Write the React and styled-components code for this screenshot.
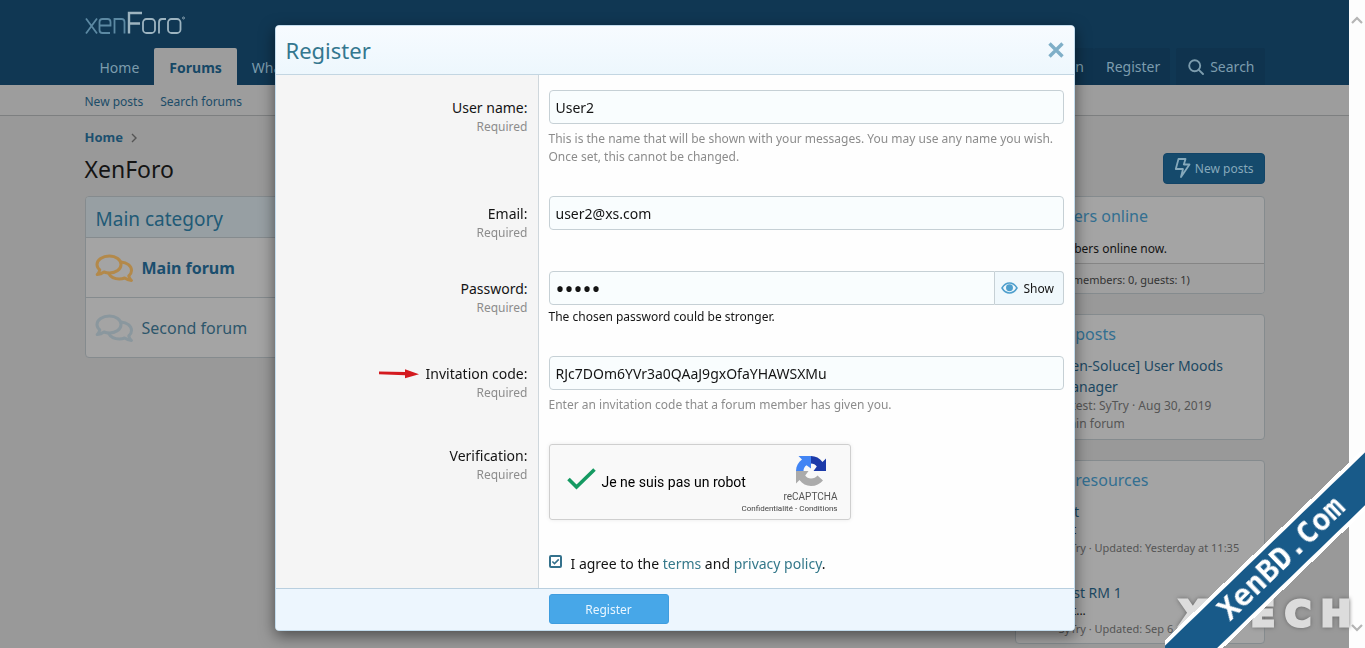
import React from 'react';
import styled, { createGlobalStyle } from 'styled-components';

const Global = createGlobalStyle`
  * { box-sizing: border-box; }
  html, body { margin: 0; height: 100%; overflow: hidden; }
  body { background: #999; font-family: "Noto Sans", "Open Sans", sans-serif; font-size: 14px; line-height: 21px; color: #141414; }
  a { text-decoration: none; }
  h1, h2, h3, p { margin: 0; font-weight: 400; }
  button, input { font-family: inherit; }
`;

const Screen = styled.div`
  display: grid;
  grid-template-columns: minmax(0, 1fr) 16px;
  height: 100vh;
  overflow: hidden;
`;
const Page = styled.div`min-width: 0; position: relative; overflow: hidden;`;
const Scrollbar = styled.div`
  background: #fdfdfd;
  display: flex;
  flex-direction: column;
  justify-content: space-between;
  align-items: center;
  padding: 15px 0;
`;
const Inner = styled.div`
  max-width: 1200px;
  margin: 0 auto;
  padding: 0 10px;
`;

const Header = styled.header`background: #103753; height: 85px;`;
const LogoRow = styled.div`height: 48px; padding-top: 11px;`;
const Nav = styled.nav`display: flex; justify-content: space-between; height: 37px;`;
const NavGroup = styled.div`display: flex; gap: ${p => p.$gap || 0}px;`;
const NavLink = styled.a`
  display: flex;
  align-items: center;
  gap: 6px;
  height: 37px;
  padding: 2px 15px 0;
  color: ${p => (p.$active ? '#164866' : '#7c9cad')};
  font-weight: ${p => (p.$active ? 700 : 400)};
  background: ${p => (p.$active ? '#9d9d9d' : 'transparent')};
  border-radius: 2px 2px 0 0;
`;
const UserLink = styled(NavLink)`padding: 0 10px 0 12px; background: #0f334e;`;
const SubNav = styled.div`background: #9d9d9d; border-bottom: 1px solid #7d7f80; height: 31px;`;
const SubLinks = styled.div`display: flex; gap: 17px; padding-top: 6px; font-size: 12px; a { color: #1c4c68; }`;

const Crumb = styled.nav`
  display: flex;
  align-items: center;
  gap: 8px;
  padding-top: 11px;
  font-size: 13px;
  font-weight: 700;
  a { color: #1c506f; }
`;
const TitleRow = styled.div`
  display: flex;
  justify-content: space-between;
  align-items: center;
  height: 34px;
  margin-top: 3px;
`;
const PageTitle = styled.h1`font-size: 23px; line-height: 34px; padding-top: 1px;`;
const NewPosts = styled.button`
  display: flex;
  align-items: center;
  gap: 4px;
  height: 31px;
  padding: 0 10px;
  border: 1px solid #124467;
  border-radius: 4px;
  background: #154a6c;
  color: #86a9bb;
  font-size: 12px;
`;
const Columns = styled.div`
  display: grid;
  grid-template-columns: minmax(0, 1fr) 250px;
  gap: 20px;
  align-items: start;
  margin-top: 11px;
`;
const Block = styled.section`
  border: 1px solid #858b8e;
  border-radius: 4px;
  background: #a4a4a4;
  overflow: hidden;
`;
const CategoryTitle = styled.h2`
  padding: 7px 10px 3px;
  font-size: 19px;
  line-height: 30px;
  color: #215a76;
  background: #979fa3;
`;
const ForumRow = styled.div`
  display: flex;
  align-items: center;
  gap: 9px;
  height: 60px;
  padding: 2px 9px 0;
  border-top: 1px solid #858b8e;
  a { font-size: 16px; color: ${p => (p.$unread ? '#1a4e6e' : '#2d566b')}; font-weight: ${p => (p.$unread ? 700 : 400)}; }
`;
const Side = styled.aside`display: flex; flex-direction: column; gap: 20px;`;
const SideTitle = styled.h3`padding: 8px 10px 7px; font-size: 16px; line-height: 22px; color: #336f91;`;
const SideText = styled.p`padding: 4px 10px; font-size: 12px;`;
const SideFoot = styled.div`border-top: 1px solid #858585; padding: 5px 10px 3px 14px; font-size: 11px; color: #333; background: #a0a0a0;`;
const SideItem = styled.article`
  padding: 3px 10px 6px 43px;
  a { color: #1c4862; display: block; }
`;
const Meta = styled.div`font-size: 12px; line-height: 18px; color: #555;`;
const Resource = styled.article`
  padding: 5px 10px 5px 43px;
  line-height: 18px;
  white-space: nowrap;
  & + & { padding-top: 22px; }
  a { color: #1c4862; display: block; }
  p { font-size: 12px; }
  ${Meta} { font-size: 11px; }
`;

const Overlay = styled.div`
  position: fixed;
  inset: 0 16px 0 0;
  display: flex;
  justify-content: center;
  align-items: flex-start;
  padding-top: 25px;
`;
const Dialog = styled.form`
  width: 800px;
  max-width: 100%;
  border: 1px solid #c3dced;
  border-radius: 4px;
  background: #fefefe;
  box-shadow: 0 5px 15px rgba(0, 0, 0, 0.5);
  overflow: hidden;
`;
const DialogHead = styled.div`
  display: flex;
  justify-content: space-between;
  align-items: center;
  height: 49px;
  padding: 0 9px 0 10px;
  background: linear-gradient(#f7fbff, #edf7fd);
  border-bottom: 1px solid #c3d6e2;
  h2 { font-size: 22px; line-height: 30px; color: #34778f; }
`;
const Close = styled.button`border: 0; padding: 0; background: none; height: 18px; line-height: 0;`;
const Row = styled.div`display: grid; grid-template-columns: 263px minmax(0, 1fr);`;
const LabelCell = styled.div`
  padding: ${p => p.$top || 22}px 10px 14px;
  background: #f5f5f5;
  border-right: 1px solid #cfd7dc;
  text-align: right;
  label { display: block; }
`;
const LabelLine = styled.div`display: flex; justify-content: flex-end; align-items: center; gap: 6px;`;
const Required = styled.div`font-size: 12px; line-height: 18px; color: #8c8c8c;`;
const Field = styled.div`padding: 15px 10px;`;
const Input = styled.input`
  display: block;
  width: 100%;
  height: 34px;
  padding: 0 6px;
  border: 1px solid #c6d0d5;
  border-radius: 4px;
  background: #f9fdfe;
  color: #141414;
  font-size: 14px;
  outline: 0;
  &[type='password'] { font-size: 24px; }
`;
const Joined = styled.div`
  display: flex;
  input { flex: 1; min-width: 0; border-radius: 4px 0 0 4px; }
`;
const Show = styled.button`
  display: flex;
  align-items: center;
  gap: 6px;
  width: 69px;
  padding: 0 6px;
  border: 1px solid #c6d0d5;
  border-left: 0;
  border-radius: 0 4px 4px 0;
  background: #f0f8fc;
  color: #141414;
  font-size: 12px;
`;
const Hint = styled.p`
  margin-top: ${p => (p.$strong ? 3 : 6)}px;
  font-size: 12px;
  line-height: 18px;
  color: ${p => (p.$strong ? '#141414' : '#8c8c8c')};
`;
const Captcha = styled.div`
  display: flex;
  width: 302px;
  height: 76px;
  padding: 10px 12px 0 17px;
  border: 1px solid #cfcfcf;
  border-radius: 3px;
  background: #f9f9f9;
  box-shadow: 0 0 4px rgba(0, 0, 0, 0.08);
  font-family: Roboto, sans-serif;
`;
const Robot = styled.div`
  flex: 1;
  min-width: 0;
  display: flex;
  align-items: center;
  gap: 6px;
  height: 54px;
  color: #000;
  white-space: nowrap;
  svg { flex: none; margin-bottom: 6px; }
`;
const Brand = styled.div`
  display: flex;
  flex-direction: column;
  align-items: flex-end;
  font-size: 10px;
  line-height: 14px;
  color: #555;
  svg { margin: 0 11px 3px 0; }
`;
const Legal = styled.div`font-size: 8px; line-height: 10px; color: #444; white-space: nowrap; a { color: inherit; }`;
const Agree = styled.label`
  display: flex;
  align-items: center;
  gap: 9px;
  a { color: #34788a; }
`;
const Tick = styled.input`
  appearance: none;
  width: 13px;
  height: 13px;
  margin: 0 0 4px;
  border: 2px solid #34718c;
  border-radius: 2px;
  background: #fff url("data:image/svg+xml,%3Csvg xmlns='http://www.w3.org/2000/svg' viewBox='0 0 10 10'%3E%3Cpath d='M1.5 5l2.4 2.4L8.6 2.6' fill='none' stroke='%2334718c' stroke-width='1.7'/%3E%3C/svg%3E") center / 9px 9px;
`;
const AgreeField = styled(Field)`padding: 18px 10px 14px;`;
const DialogFoot = styled.div`
  display: flex;
  padding: 5px 10px 6px 273px;
  border-top: 1px solid #b9cfdf;
  background: #edf6fe;
`;
const Submit = styled.button`
  width: 120px;
  height: 30px;
  border: 1px solid #3f9ddf;
  border-radius: 3px;
  background: #47a7e8;
  color: #e9f6ff;
  font-size: 12px;
`;

const Corner = styled.div`
  position: fixed;
  right: 0;
  bottom: 0;
  width: 200px;
  height: 196px;
  overflow: hidden;
  pointer-events: none;
`;
const Ribbon = styled.div`
  position: absolute;
  left: -43px;
  top: 84px;
  width: 320px;
  height: 46px;
  border: solid #fff;
  border-width: 4px 0;
  background: #185a89;
  color: #fff;
  font: 700 30px/36px "DejaVu Sans Mono", monospace;
  text-align: center;
  transform: rotate(-44deg);
`;
const Mark = styled.div`
  position: absolute;
  right: 14px;
  bottom: 14px;
  width: 172px;
  display: flex;
  justify-content: space-between;
  color: #dcdcdc;
  font: 700 36px/40px "DejaVu Sans", sans-serif;
  -webkit-text-stroke: 3px #dcdcdc;
  filter: drop-shadow(0 0 2px #666);
`;

const Logo = () => (
  <svg width="101" height="26" viewBox="0 0 101 26" fill="none" strokeWidth="1.8" role="img" aria-label="xenForo">
    <g stroke="#5c89a3">
      <path d="M1 7.500L12 22.500M12 7.500L1 22.500" />
      <path d="M14.500 14.500H25.500V11Q25.500 8 22.500 8H17.500Q14.500 8 14.500 11V19Q14.500 22 17.500 22H25" />
      <path d="M29.500 22.500V8H36.500Q39.500 8 39.500 11V22.500" />
    </g>
    <g stroke="#9db4c0">
      <path d="M44 22.500V2H57M44 12.500H55" strokeWidth="2.400" />
      <rect x="58" y="8" width="12" height="14" rx="3.500" />
      <path d="M74 22.500V11.500Q74 8 77 8H81" />
      <rect x="83" y="8" width="12.500" height="14" rx="3.500" />
      <circle cx="98.500" cy="7" r="1" strokeWidth="0.800" />
    </g>
  </svg>
);
const Comments = ({ color }) => (
  <svg width="38" height="32" viewBox="0 0 38 32" fill="none" stroke={color} strokeWidth="3" strokeLinejoin="round">
    <path d="M14.500 3C21 3 26 6.700 26 11.500S21 20 14.500 20C12.500 20 10.700 19.700 9 19C7.200 20.300 5 21.300 2.200 21.600C3.600 20.200 4.500 18.500 4.800 16.800C3 15.300 2 13.500 2 11.500C2 6.700 7.500 3 14.500 3Z" />
    <path d="M26 9C32 9.300 36.500 13 36.500 17.500C36.500 19.600 35.500 21.400 33.800 22.900C34.100 24.600 35 26.100 36.400 27.500C33.700 27.200 31.500 26.300 29.700 25C28 25.700 26.200 26 24.200 26C19.600 26 15.700 24 13.700 20.500" />
  </svg>
);
const Bolt = () => (
  <svg width="17" height="20" viewBox="0 0 17 20" fill="none" stroke="#86a9bb" strokeWidth="1.800" strokeLinejoin="round">
    <path d="M4.500 1H11.500L9.800 6.500H15.500L7 19L9 11H1.800Z" />
  </svg>
);
const Search = () => (
  <svg width="16" height="16" viewBox="0 0 16 16" fill="none" stroke="#7c9cad" strokeWidth="1.900" strokeLinecap="round">
    <circle cx="6.700" cy="6.700" r="5.500" /><path d="M10.800 10.800L15 15" />
  </svg>
);
const Eye = () => (
  <svg width="17" height="12" viewBox="0 0 17 12" fill="none" stroke="#4f9fcd" strokeWidth="1.500">
    <path d="M1 6C3 2.600 5.500 1 8.500 1S14 2.600 16 6C14 9.400 11.500 11 8.500 11S3 9.400 1 6Z" />
    <circle cx="8.500" cy="5.800" r="2.700" fill="#4f9fcd" />
  </svg>
);
const Chevron = ({ d }) => (
  <svg width="12" height="10" viewBox="0 0 12 10" fill="none" stroke="#b5b5b5" strokeWidth="2.200"><path d={d} /></svg>
);
const Arrow = () => (
  <svg width="42" height="10" viewBox="0 0 42 10" fill="#d41a1f"><path d="M1 2.500L27 3V.2L41 5.300L27 9.200V6.200L1 5.300Z" /></svg>
);
const Recaptcha = () => (
  <svg width="32" height="32" viewBox="0 0 32 32">
    <path fill="#1c3aa9" d="M31 16V3.500L27.500 7C24.700 3.300 20.700 1 16 1V8.500C18.500 8.500 20.500 9.600 21.800 11.500L18.500 16Z" />
    <path fill="#4285f4" d="M16 1H3.500L7 4.500C3.300 7.300 1 11.300 1 16H8.500C8.500 13.500 9.600 11.500 11.500 10.200L16 13.500Z" />
    <path fill="#ababab" d="M1 16V28.500L4.500 25C7.300 28.700 11.300 31 16 31C21 31 25 29 28 25.500L22.500 20.500C21 22.400 18.800 23.500 16 23.500C13.500 23.500 11.500 22.400 10.200 20.500L13.500 16Z" />
  </svg>
);

const Item = ({ id, label, top, arrow, children }) => (
  <Row>
    <LabelCell $top={top}>
      <LabelLine>{arrow && <Arrow />}<label htmlFor={id}>{label}</label></LabelLine>
      <Required>Required</Required>
    </LabelCell>
    <Field>{children}</Field>
  </Row>
);

export default function App() {
  return (
    <>
      <Global />
      <Screen>
        <Page>
          <Header>
            <Inner>
              <LogoRow><Logo /></LogoRow>
              <Nav>
                <NavGroup>
                  <NavLink href="#home">Home</NavLink>
                  <NavLink href="#forums" $active>Forums</NavLink>
                  <NavLink href="#new">What's new</NavLink>
                </NavGroup>
                <NavGroup $gap={6}>
                  <NavGroup>
                    <UserLink href="#login">Log in</UserLink>
                    <UserLink href="#register">Register</UserLink>
                  </NavGroup>
                  <UserLink href="#search"><Search />Search</UserLink>
                </NavGroup>
              </Nav>
            </Inner>
          </Header>
          <SubNav>
            <Inner><SubLinks><a href="#posts">New posts</a><a href="#find">Search forums</a></SubLinks></Inner>
          </SubNav>
          <Inner>
            <Crumb>
              <a href="#home">Home</a>
              <svg width="6" height="10" viewBox="0 0 6 10" fill="none" stroke="#555" strokeWidth="1.400"><path d="M1 1L5 5L1 9" /></svg>
            </Crumb>
            <TitleRow>
              <PageTitle>XenForo</PageTitle>
              <NewPosts type="button"><Bolt />New posts</NewPosts>
            </TitleRow>
            <Columns>
              <Block>
                <CategoryTitle>Main category</CategoryTitle>
                <ForumRow $unread><Comments color="#b3894a" /><a href="#main">Main forum</a></ForumRow>
                <ForumRow><Comments color="#8a979e" /><a href="#second">Second forum</a></ForumRow>
              </Block>
              <Side>
                <Block>
                  <SideTitle>Members online</SideTitle>
                  <SideText>No members online now.</SideText>
                  <SideFoot>Total: 1 (members: 0, guests: 1)</SideFoot>
                </Block>
                <Block>
                  <SideTitle>Latest posts</SideTitle>
                  <SideItem>
                    <a href="#moods">[Xen-Soluce] User Moods Manager</a>
                    <Meta>Latest: SyTry · Aug 30, 2019</Meta>
                    <Meta>Main forum</Meta>
                  </SideItem>
                </Block>
                <Block>
                  <SideTitle>Latest resources</SideTitle>
                  <Resource>
                    <a href="#set">Set</a>
                    <p>Set</p>
                    <Meta>SyTry · Updated: Yesterday at 11:35</Meta>
                  </Resource>
                  <Resource>
                    <a href="#rm">Test RM 1</a>
                    <p>Set...</p>
                    <Meta>SyTry · Updated: Sep 6, 2019</Meta>
                  </Resource>
                </Block>
              </Side>
            </Columns>
          </Inner>
        </Page>
        <Scrollbar>
          <Chevron d="M1 8L6 3L11 8" />
          <Chevron d="M1 2L6 7L11 2" />
        </Scrollbar>
      </Screen>
      <Overlay>
        <Dialog onSubmit={e => e.preventDefault()}>
          <DialogHead>
            <h2>Register</h2>
            <Close type="button" aria-label="Close">
              <svg width="18" height="18" viewBox="0 0 18 18" stroke="#7fafc8" strokeWidth="3.400"><path d="M2.500 2.500L15.500 15.500M15.500 2.500L2.500 15.500" /></svg>
            </Close>
          </DialogHead>
          <Item id="user" label="User name:">
            <Input id="user" defaultValue="User2" />
            <Hint>This is the name that will be shown with your messages. You may use any name you wish. Once set, this cannot be changed.</Hint>
          </Item>
          <Item id="email" label="Email:"><Input id="email" defaultValue="user2@xs.com" /></Item>
          <Item id="password" label="Password:">
            <Joined>
              <Input id="password" type="password" defaultValue="abcde" />
              <Show type="button"><Eye />Show</Show>
            </Joined>
            <Hint $strong>The chosen password could be stronger.</Hint>
          </Item>
          <Item id="code" label="Invitation code:" arrow>
            <Input id="code" defaultValue="RJc7DOm6YVr3a0QAaJ9gxOfaYHAWSXMu" />
            <Hint>Enter an invitation code that a forum member has given you.</Hint>
          </Item>
          <Item label="Verification:" top={16}>
            <Captcha>
              <Robot>
                <svg width="29" height="22" viewBox="0 0 29 22" fill="none" stroke="#159a62" strokeWidth="3.600"><path d="M1.500 11L9.500 19L27.500 1.500" /></svg>
                Je ne suis pas un robot
              </Robot>
              <Brand>
                <Recaptcha />
                <div>reCAPTCHA</div>
                <Legal><a href="#privacy">Confidentialité</a> - <a href="#conditions">Conditions</a></Legal>
              </Brand>
            </Captcha>
          </Item>
          <Row>
            <LabelCell />
            <AgreeField>
              <Agree>
                <Tick type="checkbox" defaultChecked />
                <span>I agree to the <a href="#terms">terms</a> and <a href="#policy">privacy policy</a>.</span>
              </Agree>
            </AgreeField>
          </Row>
          <DialogFoot><Submit type="submit">Register</Submit></DialogFoot>
        </Dialog>
      </Overlay>
      <Corner>
        <Mark>{[...'XTECH'].map(c => <span key={c}>{c}</span>)}</Mark>
        <Ribbon>XenBD.Com</Ribbon>
      </Corner>
    </>
  );
}
